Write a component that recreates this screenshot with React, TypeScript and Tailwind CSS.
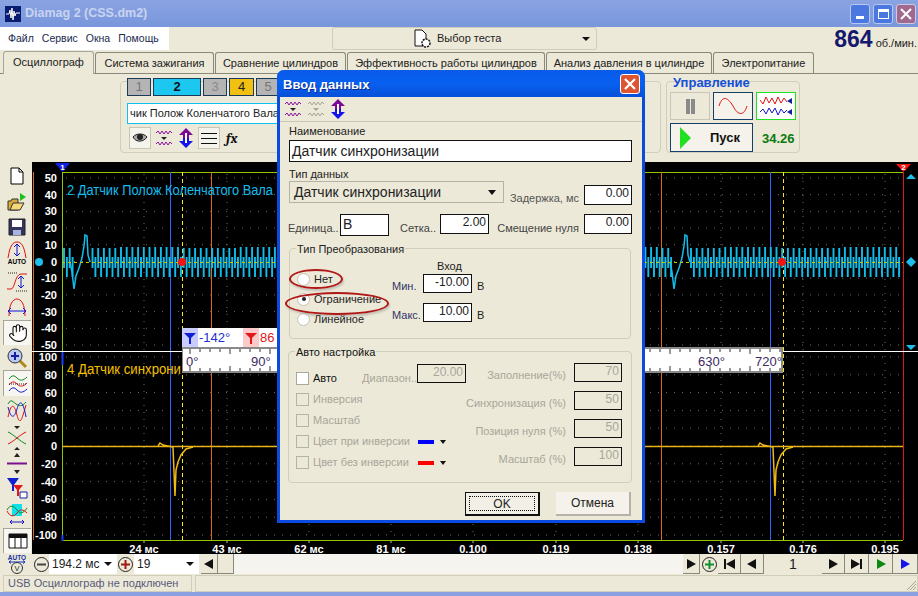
import { Hand } from "lucide-react";
import type { ReactNode } from "react";

const yTop = [50, 40, 30, 20, 10, 0, -10, -20, -30, -40, -50];
const yBottom = [100, 80, 60, 40, 20, 0, -20, -40, -60, -80, -100];
const xLabels = ["24 мс", "43 мс", "62 мс", "81 мс", "0.100", "0.119", "0.138", "0.157", "0.176", "0.195"];
const xGrid = [144, 227, 309, 391, 473, 556, 638, 721, 803, 885];

const topTabs = [
  { label: "Система зажигания", w: "w-[119px]" },
  { label: "Сравнение цилиндров", w: "w-[131px]" },
  { label: "Эффективность работы цилиндров", w: "w-[198px]" },
  { label: "Анализ давления в цилиндре", w: "w-[166px]" },
  { label: "Электропитание", w: "w-[101px]" },
];

// comb shaped sensor trace, repeats every 600px
function cyanTrace() {
  let d = "";
  for (let x = 64; x < 901; x += 5.7) {
    const local = (x - 64) % 600;
    if (local > 8 && local < 24) continue;
    const top = 247 + Math.floor(x / 60) % 2;
    d += ` M${x.toFixed(1)} ${top} V268 M${(x + 2.9).toFixed(1)} 257 V277`;
  }
  return d;
}

function glitch(o: number) {
  return `M${70 + o} 262 L${72 + o} 272 L${74 + o} 289 L${76 + o} 276 L${79 + o} 268 L${82 + o} 258 L${84 + o} 246 L${85 + o} 235 L${87 + o} 236 L${88 + o} 255 L${90 + o} 262`;
}

function yellowTrace(o: number) {
  return `M${158 + o} 446 L${160 + o} 443 L${163 + o} 445 L${173 + o} 447 L${175 + o} 496 L${176 + o} 470 L${178 + o} 462 L${181 + o} 455 L${186 + o} 449 L${193 + o} 447`;
}

function Chart() {
  const topRows = yTop.map((_, i) => 178 + i * 16.7);
  const lowRows = yBottom.map((_, i) => 357 + i * 17.8);
  return (
    <svg className="block" width="886" height="392" viewBox="32 162 886 392">
      <rect x="32" y="162" width="886" height="392" fill="#000" />
      {[...topRows, ...lowRows].map((y) => (
        <line key={y} x1="66" x2="900" y1={y} y2={y} stroke="#6a6a6a" strokeDasharray="1 7" />
      ))}
      {xGrid.map((x) => (
        <g key={x}>
          <line x1={x} x2={x} y1="174" y2="538" stroke="#6a6a6a" strokeDasharray="1 6" />
          <line x1={x} x2={x} y1="540" y2="543" stroke="#bbb" />
        </g>
      ))}
      <line x1="62" x2="903" y1="172.5" y2="172.5" stroke="#8fc800" />
      <line x1="62" x2="903" y1="540.5" y2="540.5" stroke="#8fc800" />
      <line x1="62.5" x2="62.5" y1="172" y2="540" stroke="#8fc800" />
      <line x1="62.5" x2="62.5" y1="351" y2="365" stroke="#1a3cff" strokeWidth="2" />
      <line x1="62.5" x2="62.5" y1="535" y2="541" stroke="#1a3cff" strokeWidth="2" />
      {[33.5, 211.5, 661.5].map((x) => (
        <line key={x} x1={x} x2={x} y1="172" y2="540" stroke="#d9691e" />
      ))}
      {[170.5, 770.5].map((x) => (
        <line key={x} x1={x} x2={x} y1="172" y2="540" stroke="#2f62ff" />
      ))}
      {[182.5, 783.5].map((x) => (
        <line key={x} x1={x} x2={x} y1="172" y2="540" stroke="#ffe81a" strokeDasharray="4 3" />
      ))}
      <line x1="903.5" x2="903.5" y1="172" y2="540" stroke="#e01818" />
      <line x1="32" x2="918" y1="351.5" y2="351.5" stroke="#fff" />

      <path d={cyanTrace()} fill="none" stroke="#12bdec" strokeWidth="1.9" />
      <path d={glitch(0)} fill="none" stroke="#12bdec" strokeWidth="1.5" />
      <path d={glitch(600)} fill="none" stroke="#12bdec" strokeWidth="1.5" />
      <line x1="62" x2="903" y1="262.5" y2="262.5" stroke="#c8c800" strokeDasharray="3 3" />
      <line x1="62" x2="903" y1="446.5" y2="446.5" stroke="#e8b41a" strokeWidth="1.5" />
      <path d={yellowTrace(0)} fill="none" stroke="#eeb915" strokeWidth="1.5" />
      <path d={yellowTrace(600)} fill="none" stroke="#eeb915" strokeWidth="1.5" />

      <circle cx="182" cy="262" r="4" fill="#f01414" />
      <circle cx="782" cy="262" r="4" fill="#f01414" />
      <circle cx="39" cy="262" r="4" fill="#1fbdec" />
      <path d="M911 257 L916 262 L911 267 L906 262 Z" fill="#1fbdec" />
      <path d="M906 179 L911 174 L916 179 Z" fill="#1fbdec" />
      <path d="M906 345 L916 345 L911 350 Z" fill="#1fbdec" />
      <path d="M55 163 L70 163 L62.5 172 Z" fill="#1020e0" />
      <text x="62.5" y="170" fill="#fff" fontSize="8" fontWeight="700" textAnchor="middle">1</text>
      <path d="M896 164 L911 164 L903.5 172 Z" fill="#f01414" />
      <text x="903.5" y="170" fill="#fff" fontSize="8" fontWeight="700" textAnchor="middle">2</text>

      <g fontSize="11" fontWeight="700" fill="#fff" textAnchor="end">
        {yTop.map((v, i) => (
          <text key={v} x="57" y={topRows[i] + 4}>{v}</text>
        ))}
        {yBottom.map((v, i) => (
          <text key={v} x="57" y={lowRows[i] + 4}>{v}</text>
        ))}
      </g>
      <g fontSize="11" fontWeight="700" fill="#fff" textAnchor="middle">
        {xLabels.map((t, i) => (
          <text key={t} x={xGrid[i]} y="553">{t}</text>
        ))}
      </g>
      <text x="67" y="195" fill="#12bdec" fontSize="14" textLength="206" lengthAdjust="spacingAndGlyphs">2 Датчик Полож Коленчатого Вала</text>
      <text x="67" y="374" fill="#f6c000" fontSize="14" textLength="114" lengthAdjust="spacingAndGlyphs">4 Датчик синхрони</text>
    </svg>
  );
}

function AngleRuler() {
  const ticks = Array.from({ length: 61 }, (_, i) => i * 10);
  return (
    <div className="absolute left-[182px] top-[166px] w-[601px]">
      <div className="flex h-[19px] items-stretch text-[13px] leading-[19px]">
        <div className="flex w-[16px] items-center justify-center bg-[#c8ccff]">
          <svg width="12" height="12" viewBox="0 0 12 12"><path d="M0 1 H12 L7 6 V12 H5 V6 Z" fill="#1020d0" /></svg>
        </div>
        <div className="w-[45px] bg-white pl-[1px] text-[#2030d0]">-142°</div>
        <div className="flex w-[16px] items-center justify-center bg-[#ffc8c8]">
          <svg width="12" height="12" viewBox="0 0 12 12"><path d="M0 1 H12 L7 6 V12 H5 V6 Z" fill="#e01818" /></svg>
        </div>
        <div className="w-[30px] bg-white pl-[1px] text-[#e01818]">86</div>
      </div>
      <div className="relative h-[26px] border-y-2 border-r-2 border-l border-[#8a8a8a] bg-white text-[13px] text-[#3a2a60]">
        <svg className="absolute inset-0" width="598" height="22" viewBox="0 0 598 22">
          {ticks.map((x) => (
            <g key={x} stroke="#333">
              <line x1={x + 7} x2={x + 7} y1="0" y2={x % 40 === 0 ? 5 : 3} />
              <line x1={x + 7} x2={x + 7} y1="22" y2={x % 40 === 0 ? 17 : 19} />
            </g>
          ))}
        </svg>
        <span className="absolute left-[3px] top-[3px]">0°</span>
        <span className="absolute left-[68px] top-[3px]">90°</span>
        <span className="absolute left-[515px] top-[3px]">630°</span>
        <span className="absolute left-[572px] top-[3px]">720°</span>
      </div>
    </div>
  );
}

function Squiggles({ color = "#8a10a0", mid = true }: { color?: string; mid?: boolean }) {
  return (
    <svg width="18" height="18" viewBox="0 0 18 18" fill="none" stroke={color}>
      <path d="M1 4 L3 2 L5 5 L7 2 L9 5 L11 2 L13 5 L15 2 L17 4" />
      <path d="M1 15 L3 13 L5 16 L7 13 L9 16 L11 13 L13 16 L15 13 L17 15" />
      {mid && <path d="M6 8 H12 L9 11 Z" fill={color === "#8a10a0" ? "#222" : color} stroke="none" />}
    </svg>
  );
}

function UpDown() {
  return (
    <svg width="16" height="20" viewBox="0 0 16 20">
      <path d="M8 0 L15 7 H11 V10 H5 V7 H1 Z" fill="#7a0a96" />
      <path d="M8 20 L15 13 H11 V10 H5 V13 H1 Z" fill="#1414e8" />
      <path d="M7 5 H9 V15 H7 Z" fill="#fff" />
    </svg>
  );
}

function ToolSlot({ children, pressed, h }: { children: ReactNode; pressed?: boolean; h: string }) {
  return (
    <div className={`flex ${h} w-[28px] items-center justify-center ${pressed ? "border-l border-t border-[#a8a698] bg-[#f7f6f0]" : ""}`}>
      {children}
    </div>
  );
}

function LeftToolbar() {
  return (
    <div className="flex w-[32px] shrink-0 flex-col items-start pl-[3px] pt-[1px]">
      <ToolSlot h="h-[25px]">
        <svg width="14" height="18" viewBox="0 0 14 18"><path d="M1 1 H9 L13 5 V17 H1 Z" fill="#fff" stroke="#000" /><path d="M9 1 V5 H13" fill="none" stroke="#000" /></svg>
      </ToolSlot>
      <ToolSlot h="h-[28px]">
        <svg width="20" height="20" viewBox="0 0 20 20">
          <path d="M1 9 H4 L5 7 H11 V18 H1 Z" fill="#d9a93a" stroke="#333" />
          <path d="M3 18 L6 11 H17 L13 18 Z" fill="#f6d878" stroke="#333" />
          <path d="M13 1 L19 5 L13 9 Z" fill="#20c020" />
        </svg>
      </ToolSlot>
      <ToolSlot h="h-[22px]">
        <svg width="18" height="18" viewBox="0 0 18 18">
          <path d="M1 1 H17 V17 H1 Z" fill="#34345c" stroke="#222" />
          <path d="M4 2 H14 V9 H4 Z" fill="#fff" />
          <path d="M5 12 H13 V17 H5 Z" fill="#a8b4e0" />
        </svg>
      </ToolSlot>
      <ToolSlot h="h-[30px]">
        <svg width="22" height="24" viewBox="0 0 22 24" fill="none">
          <path d="M2 17 C4 4 7 1 11 1 C15 1 18 4 20 17" stroke="#e01010" />
          <path d="M11 3 V15 M8 6 L11 3 L14 6 M8 12 L11 15 L14 12" stroke="#1414c0" />
          <text x="11" y="23" fontSize="6.5" fontWeight="700" fill="#000" stroke="none" textAnchor="middle">AUTO</text>
        </svg>
      </ToolSlot>
      <ToolSlot h="h-[28px]">
        <svg width="22" height="22" viewBox="0 0 22 22" fill="none">
          <path d="M1 18 H5 C9 18 9 3 15 3 H21" stroke="#e01010" />
          <path d="M2 2 H12 M10 20 H21" stroke="#222" strokeDasharray="1 1" />
          <path d="M15 5 V17 M12 8 L15 5 L18 8 M12 14 L15 17 L18 14" stroke="#1414c0" />
        </svg>
      </ToolSlot>
      <ToolSlot h="h-[24px]">
        <svg width="22" height="20" viewBox="0 0 22 20" fill="none">
          <path d="M3 18 C3 6 7 1 11 1 C15 1 19 6 19 18" stroke="#e01010" />
          <path d="M2 13 H20 M5 10 L2 13 L5 16 M17 10 L20 13 L17 16" stroke="#1414e0" />
        </svg>
      </ToolSlot>
      <ToolSlot pressed h="h-[25px]">
        <Hand size={20} strokeWidth={1.3} fill="#fff" color="#111" />
      </ToolSlot>
      <ToolSlot h="h-[25px]">
        <svg width="22" height="22" viewBox="0 0 22 22">
          <path d="M13 13 L20 20" stroke="#b08820" strokeWidth="3" />
          <circle cx="9" cy="9" r="7" fill="#b8c8f0" stroke="#333" />
          <path d="M5 9 H13 M9 5 V13" stroke="#1420a0" strokeWidth="2" />
        </svg>
      </ToolSlot>
      <ToolSlot pressed h="h-[26px]">
        <svg width="20" height="20" viewBox="0 0 20 20" fill="none">
          <path d="M1 5 C4 1 6 1 9 4 S15 7 19 3" stroke="#0a8a20" />
          <path d="M1 11 C4 7 6 7 9 10 S15 13 19 9" stroke="#e01010" />
          <path d="M1 10 H19" stroke="#222" strokeDasharray="1 1" />
          <path d="M1 17 C4 13 6 13 9 16 S15 19 19 15" stroke="#1414d0" />
        </svg>
      </ToolSlot>
      <ToolSlot h="h-[27px]">
        <svg width="20" height="22" viewBox="0 0 20 22" fill="none">
          <path d="M1 5 C4 -1 6 3 9 5 S15 8 19 3" stroke="#0a8a20" />
          <path d="M1 18 C4 4 7 4 10 16 S15 20 19 6" stroke="#e01010" />
          <path d="M1 8 C4 20 7 20 10 10 S16 2 19 18" stroke="#1414d0" />
        </svg>
      </ToolSlot>
      <ToolSlot h="h-[29px]">
        <svg width="20" height="24" viewBox="0 0 20 24" fill="none">
          <path d="M7 0 H13 L10 3 Z M7 24 H13 L10 21 Z" fill="#222" />
          <path d="M1 6 C6 8 14 16 19 18" stroke="#0a8a20" />
          <path d="M1 18 C6 16 14 8 19 6" stroke="#e01010" />
        </svg>
      </ToolSlot>
      <ToolSlot h="h-[23px]">
        <svg width="20" height="22" viewBox="0 0 20 22">
          <path d="M7 4 L10 0 L13 4 Z M7 17 L13 17 L10 21 Z" fill="#222" />
          <path d="M0 10.5 H20" stroke="#7a1090" strokeWidth="2" />
        </svg>
      </ToolSlot>
      <ToolSlot h="h-[26px]">
        <svg width="22" height="22" viewBox="0 0 22 22">
          <path d="M1 1 H13 L8 8 V14 H6 V8 Z" fill="#1020d0" />
          <path d="M7 8 H17 L13 13 V19 H11 V13 Z" fill="#e01818" />
          <path d="M14 15 H21 V21 H14 Z" fill="#fff" stroke="#1420a0" />
        </svg>
      </ToolSlot>
      <ToolSlot h="h-[25px]">
        <svg width="22" height="22" viewBox="0 0 22 22" fill="none">
          <path d="M6 1 H16 V13 H6 Z" fill="#10e0e8" />
          <path d="M1 7 C4 1 8 3 11 7 S17 11 21 5" stroke="#0a8a20" />
          <path d="M1 8 C4 14 8 14 11 10 S17 6 21 10" stroke="#e01010" />
          <path d="M4 19 H18 M6 17 L4 19 L6 21 M16 17 L18 19 L16 21" stroke="#1414c0" />
        </svg>
      </ToolSlot>
      <div className="mt-[2px] flex h-[25px] w-[28px] items-center justify-center border-l border-t border-[#a8a698] bg-[#f7f6f0]">
        <svg width="20" height="16" viewBox="0 0 20 16">
          <path d="M1 1 H19 V15 H1 Z" fill="#fff" stroke="#111" />
          <path d="M1 1 H19 V5 H1 Z" fill="#111" />
          <path d="M7 5 V15 M13 5 V15" stroke="#111" />
        </svg>
      </div>
    </div>
  );
}

function NumBox({ value, w, h, muted }: { value: string; w: string; h: string; muted?: boolean }) {
  return (
    <div className={`${w} ${h} shrink-0 border border-[#111] pr-[2px] text-right text-[12px] leading-[15px] ${muted ? "text-[#a8a698]" : "bg-white text-[#222]"}`}>
      {value}
    </div>
  );
}

function Radio({ on, label }: { on?: boolean; label: string }) {
  return (
    <div className="flex h-[20px] items-center gap-[4px] pl-[7px]">
      <div className="flex h-[13px] w-[13px] items-center justify-center rounded-full border border-[#c4c2b4] bg-white">
        {on && <div className="h-[4px] w-[4px] rounded-full bg-[#222]" />}
      </div>
      <span className="text-[11px] text-[#222]">{label}</span>
    </div>
  );
}

function AutoCheck({ label, enabled, swatch }: { label: string; enabled?: boolean; swatch?: string }) {
  return (
    <div className="flex h-[21px] items-center whitespace-nowrap">
      <div className={`h-[13px] w-[13px] shrink-0 border ${enabled ? "border-[#aaa89a] bg-white" : "border-[#b5b3a5]"}`} />
      <span className={`ml-[4px] w-fit text-[11px] ${enabled ? "text-[#111]" : "text-[#a8a698]"}`}>{label}</span>
      {swatch && (
        <div className="absolute left-[129px] flex items-center gap-[6px]">
          <div className={`h-[4px] w-[16px] ${swatch}`} />
          <div className="h-0 w-0 border-x-[3px] border-t-[4px] border-x-transparent border-t-[#111]" />
        </div>
      )}
    </div>
  );
}

function AutoField({ label, value }: { label: string; value: string }) {
  return (
    <div className="flex h-[19px] items-center justify-end gap-[8px]">
      <span className="mt-[5px] whitespace-nowrap text-[11px] text-[#a8a698]">{label}</span>
      <NumBox value={value} w="w-[48px]" h="h-[19px]" muted />
    </div>
  );
}

function DataDialog() {
  return (
    <div className="absolute left-[277px] top-[70px] h-[453px] w-[368px] rounded-t-[7px] border-x-[3px] border-b-[3px] border-[#0a4ade] bg-[#ece9d8]">
      <div className="-mx-[3px] flex h-[27px] items-center justify-between rounded-t-[7px] bg-gradient-to-b from-[#0a5ae8] via-[#0860f0] to-[#0850d8] pl-[6px] pr-[5px]">
        <span className="mt-[3px] text-[13px] font-bold text-white [text-shadow:1px_1px_0_#0a2a90]">Ввод данных</span>
        <div className="flex h-[20px] w-[20px] items-center justify-center rounded-[3px] border border-white bg-[#dd5533]">
          <svg width="12" height="12" viewBox="0 0 12 12"><path d="M1 1 L11 11 M11 1 L1 11" stroke="#fff" strokeWidth="2.2" /></svg>
        </div>
      </div>
      <div className="flex h-[25px] items-center gap-[5px] border-b border-[#c9c6b5] pl-[4px]">
        <Squiggles />
        <Squiggles color="#a8a698" />
        <UpDown />
      </div>
      <div className="whitespace-nowrap pl-[9px] pr-[10px] text-[11px] text-[#222]">
        <div className="mt-[1px] h-[16px] leading-[16px]">Наименование</div>
        <div className="mt-[1px] h-[22px] border border-[#111] bg-white pl-[2px] text-[14px] leading-[20px]">Датчик синхронизации</div>
        <div className="mt-[4px] h-[16px] leading-[16px]">Тип данных</div>
        <div className="-mt-[1px] flex items-start">
          <div className="flex h-[22px] w-[215px] items-center justify-between border border-[#b5b3a5] bg-[#ece9d8] pl-[4px] pr-[7px] text-[14px]">
            Датчик синхронизации
            <div className="h-0 w-0 border-x-[4px] border-t-[5px] border-x-transparent border-t-[#111]" />
          </div>
          <div className="mt-[3px] flex flex-1 items-center justify-end gap-[5px]">
            <span className="mt-[6px] text-[#555]">Задержка, мс</span>
            <NumBox value="0.00" w="w-[48px]" h="h-[20px]" />
          </div>
        </div>
        <div className="mt-[7px] flex items-start">
          <span className="-ml-[1px] mt-[6px] w-[52px] text-[#444]">Единица..</span>
          <div className="h-[22px] w-[49px] border border-[#111] bg-white pl-[2px] text-[14px] leading-[18px]">В</div>
          <span className="ml-[11px] mt-[6px] w-[40px] text-[#444]">Сетка..</span>
          <NumBox value="2.00" w="w-[49px]" h="h-[20px]" />
          <div className="flex flex-1 items-start justify-end gap-[5px]">
            <span className="mt-[6px] text-[#444]">Смещение нуля</span>
            <NumBox value="0.00" w="w-[48px]" h="h-[20px]" />
          </div>
        </div>
        <div className="relative mt-[12px] flex h-[91px] w-[342px] rounded-[4px] border border-[#d0cdb8]">
          <span className="absolute -top-[8px] left-[6px] bg-[#ece9d8] px-[1px] text-[11px] text-[#222]">Тип Преобразования</span>
          <div className="w-[102px] pt-[20px]">
            <Radio label="Нет" />
            <Radio on label="Ограничение" />
            <Radio label="Линейное" />
          </div>
          <div className="pt-[10px]">
            <div className="ml-[45px] h-[15px] leading-[15px]">Вход</div>
            <div className="flex h-[19px] items-center">
              <span className="mt-[6px] w-[31px] text-[#333366]">Мин.</span>
              <NumBox value="-10.00" w="w-[49px]" h="h-[19px]" />
              <span className="ml-[5px] mt-[6px]">В</span>
            </div>
            <div className="mt-[10px] flex h-[19px] items-center">
              <span className="mt-[6px] w-[31px] text-[#333366]">Макс.</span>
              <NumBox value="10.00" w="w-[49px]" h="h-[19px]" />
              <span className="ml-[5px] mt-[6px]">В</span>
            </div>
          </div>
        </div>
        <div className="relative -ml-[1px] mt-[12px] flex h-[132px] w-[344px] rounded-[4px] border border-[#d0cdb8] pl-[7px] pr-[13px]">
          <span className="absolute -top-[8px] left-[6px] bg-[#ece9d8] px-[1px] text-[11px] text-[#111]">Авто настройка</span>
          <div className="w-[170px] shrink-0 pt-[16px]">
            <div className="flex items-center justify-between">
              <AutoCheck enabled label="Авто" />
              <div className="-mt-[10px] flex items-center">
                <span className="mt-[10px] text-[#a8a698]">Диапазон..</span>
                <NumBox value="20.00" w="w-[49px]" h="h-[19px]" muted />
              </div>
            </div>
            <AutoCheck label="Инверсия" />
            <AutoCheck label="Масштаб" />
            <AutoCheck label="Цвет при инверсии" swatch="bg-[#0000ff]" />
            <AutoCheck label="Цвет без инверсии" swatch="bg-[#ff0000]" />
          </div>
          <div className="flex flex-1 flex-col gap-[9px] pt-[11px]">
            <AutoField label="Заполнение(%)" value="70" />
            <AutoField label="Синхронизация (%)" value="50" />
            <AutoField label="Позиция нуля (%)" value="50" />
            <AutoField label="Масштаб (%)" value="100" />
          </div>
        </div>
        <div className="mt-[9px] flex h-[24px] justify-end gap-[16px] pr-[1px]">
          <div className="flex w-[75px] items-center justify-center border border-[#111] border-b-2 border-r-2 bg-[#f2f0e6] p-[3px]">
            <div className="flex h-full w-full items-center justify-center border border-dotted border-[#111] text-[12px]">OK</div>
          </div>
          <div className="flex w-[75px] items-center justify-center border-b-2 border-r-2 border-[#b5b3a5] bg-[#f4f2ea] text-[12px]">Отмена</div>
        </div>
      </div>
      <div className="absolute left-[9px] top-[199px] h-[20px] w-[54px] rounded-[50%] border-2 border-[#b01818] shadow-[1px_2px_2px_#8886]" />
      <div className="absolute left-[5px] top-[222px] h-[23px] w-[104px] rounded-[50%] border-2 border-[#b01818] shadow-[1px_2px_2px_#8886]" />
    </div>
  );
}

function PageBtn({ w, children }: { w: string; children: ReactNode }) {
  return (
    <div className={`${w} flex h-[20px] shrink-0 items-center justify-center border-b border-r border-[#8a887a] bg-[#ece9d8]`}>
      {children}
    </div>
  );
}

function Tri({ color = "#111", dir = "right" }: { color?: string; dir?: "right" | "left" }) {
  return (
    <svg width="12" height="12" viewBox="0 0 12 12">
      <path d={dir === "right" ? "M2 1 L11 6 L2 11 Z" : "M10 1 L1 6 L10 11 Z"} fill={color} />
    </svg>
  );
}

function RoundBtn({ color, plus }: { color: string; plus?: boolean }) {
  return (
    <div className="flex h-[15px] w-[15px] shrink-0 items-center justify-center rounded-full border border-[#222]">
      <svg width="9" height="9" viewBox="0 0 9 9">
        <path d={plus ? "M0 4.5 H9 M4.5 0 V9" : "M0 4.5 H9"} stroke={color} strokeWidth="2" />
      </svg>
    </div>
  );
}

function BottomBar() {
  return (
    <div className="flex h-[20px] shrink-0 items-center text-[#222]">
      <div className="flex w-[33px] justify-center">
        <svg width="20" height="20" viewBox="0 0 20 20" fill="none">
          <text x="10" y="6" fontSize="6.5" fontWeight="700" fill="#1430a0" textAnchor="middle">AUTO</text>
          <path d="M2 8 H18 M4 6.5 L2 8 L4 9.5 M16 6.5 L18 8 L16 9.5" stroke="#1430c0" />
          <circle cx="10" cy="14" r="5.5" stroke="#333" />
          <text x="10" y="17" fontSize="7.5" fill="#222" textAnchor="middle">V</text>
        </svg>
      </div>
      <div className="flex w-[16px] justify-center"><RoundBtn color="#444" /></div>
      <div className="flex h-[20px] w-[68px] items-center justify-between whitespace-nowrap bg-white pl-[3px] pr-[5px] text-[12px]">
        194.2 мс
        <div className="h-0 w-0 border-x-[4px] border-t-[4px] border-x-transparent border-t-[#111]" />
      </div>
      <div className="flex w-[17px] justify-center"><RoundBtn color="#a01818" plus /></div>
      <div className="flex h-[20px] w-[65px] items-center justify-between bg-white pl-[3px] pr-[5px] text-[12px]">
        19
        <div className="h-0 w-0 border-x-[4px] border-t-[4px] border-x-transparent border-t-[#111]" />
      </div>
      <div className="w-[2px]" />
      <PageBtn w="w-[17px]"><Tri dir="left" /></PageBtn>
      <PageBtn w="w-[16px]">{null}</PageBtn>
      <div className="h-[20px] flex-1 bg-[#f5f4ee]" />
      <PageBtn w="w-[17px]"><Tri /></PageBtn>
      <div className="flex w-[18px] justify-center"><RoundBtn color="#109030" plus /></div>
      <PageBtn w="w-[23px]">
        <svg width="12" height="12" viewBox="0 0 12 12"><path d="M1 1 H3 V11 H1 Z M12 1 L3 6 L12 11 Z" fill="#111" /></svg>
      </PageBtn>
      <PageBtn w="w-[23px]"><Tri dir="left" /></PageBtn>
      <div className="flex h-[20px] w-[58px] items-center justify-center text-[14px]">1</div>
      <PageBtn w="w-[23px]"><Tri /></PageBtn>
      <PageBtn w="w-[24px]">
        <svg width="12" height="12" viewBox="0 0 12 12"><path d="M9 1 H11 V11 H9 Z M0 1 L9 6 L0 11 Z" fill="#111" /></svg>
      </PageBtn>
      <PageBtn w="w-[24px]"><Tri color="#0a8a10" /></PageBtn>
      <PageBtn w="w-[25px]"><Tri color="#1414e8" /></PageBtn>
    </div>
  );
}

export default function App() {
  return (
    <div className="relative flex h-[596px] w-[918px] flex-col overflow-hidden bg-[#ece9d8] [font-family:'Liberation_Sans',sans-serif] text-[11px] text-[#222]">
      {/* title bar */}
      <div className="flex h-[27px] shrink-0 items-center justify-between bg-gradient-to-b from-[#8aa4e2] to-[#7a96dc] pl-[5px] pr-[2px]">
        <div className="flex items-center gap-[4px]">
          <svg width="16" height="16" viewBox="0 0 16 16">
            <rect width="16" height="16" fill="#0a1c70" />
            <path d="M1 8 H4 L5 4 L6 12 L7 2 L8 14 L9 5 L10 10 L11 7 H15" fill="none" stroke="#fff" />
          </svg>
          <span className="text-[12.5px] font-bold text-[#c8d4f0]">Diamag 2 (CSS.dm2)</span>
        </div>
        <div className="flex gap-[3px]">
          <div className="flex h-[20px] w-[20px] items-end justify-center rounded-[3px] border border-[#b8c8f0] bg-[#4a78e0] pb-[4px]">
            <div className="h-[3px] w-[8px] bg-white" />
          </div>
          <div className="flex h-[20px] w-[20px] items-center justify-center rounded-[3px] border border-[#b8c8f0] bg-[#4a78e0]">
            <div className="h-[10px] w-[11px] border border-t-[3px] border-white" />
          </div>
          <div className="flex h-[20px] w-[20px] items-center justify-center rounded-[3px] border border-[#d0c8e0] bg-[#a06a90]">
            <svg width="12" height="12" viewBox="0 0 12 12"><path d="M1 1 L11 11 M11 1 L1 11" stroke="#fff" strokeWidth="2" /></svg>
          </div>
        </div>
      </div>

      {/* menu row */}
      <div className="flex h-[25px] shrink-0">
        <div className="flex h-[23px] w-[169px] items-center gap-[8px] bg-white pl-[8px] text-[10.5px] text-[#1a2a50]">
          <span>Файл</span>
          <span>Сервис</span>
          <span>Окна</span>
          <span>Помощь</span>
        </div>
        <div className="ml-[163px] flex h-[23px] w-[265px] items-center rounded-[3px] border border-[#d0cdb8] pl-[80px] pr-[6px]">
          <svg width="20" height="20" viewBox="0 0 20 20" fill="none">
            <path d="M2 1 H9 L13 5 V17 H2 Z" fill="#fff" stroke="#111" />
            <circle cx="13" cy="14" r="4" fill="#fff" stroke="#111" strokeWidth="1.5" strokeDasharray="2 1" />
          </svg>
          <span className="ml-[4px] flex-1 text-[11px]">Выбор теста</span>
          <div className="h-0 w-0 border-x-[4px] border-t-[4px] border-x-transparent border-t-[#111]" />
        </div>
        <div className="ml-auto flex h-[24px] items-baseline gap-[3px] pr-[1px]">
          <span className="text-[23px] font-bold leading-[24px] text-[#14186e]">864</span>
          <span className="text-[11px] text-[#222]">об./мин.</span>
        </div>
      </div>

      {/* tabs */}
      <div className="flex h-[22px] shrink-0 items-stretch gap-[1px] whitespace-nowrap border-b border-[#8a887a] pl-[3px]">
        <div className="-mt-[1px] h-[23px] w-[91px] rounded-t-[3px] border-x border-t border-[#a8a698] bg-[#ece9d8] text-center text-[11px] leading-[21px]">Осциллограф</div>
        {topTabs.map((t) => (
          <div key={t.label} className={`${t.w} rounded-t-[3px] border-x border-t border-[#8a887a] text-center text-[11px] leading-[20px]`}>
            {t.label}
          </div>
        ))}
      </div>

      {/* channels + controls */}
      <div className="flex h-[88px] shrink-0 gap-[5px] pl-[120px] pt-[7px]">
        <div className="h-[72px] w-[541px] rounded-[4px] border border-[#d0cdb8] pl-[6px]">
          <div className="-mt-[4px] flex gap-[2px] text-[13px]">
            <div className="h-[18px] w-[24px] border border-[#1a3a5a] bg-[#b4b4b4] text-center leading-[16px] text-[#777]">1</div>
            <div className="h-[18px] w-[48px] border border-[#1a3a5a] bg-[#1cc8f0] text-center font-bold leading-[16px] text-[#111]">2</div>
            <div className="h-[18px] w-[24px] border border-[#1a3a5a] bg-[#b4b4b4] text-center leading-[16px] text-[#888]">3</div>
            <div className="h-[18px] w-[25px] border border-[#1a3a5a] bg-[#f2c010] text-center leading-[16px]">4</div>
            <div className="h-[18px] w-[24px] border border-[#1a3a5a] bg-[#b4b4b4] text-center leading-[16px] text-[#777]">5</div>
          </div>
          <div className="mt-[7px] h-[21px] w-[300px] whitespace-nowrap border border-[#10c0f0] bg-white pl-[2px] text-[11px] leading-[19px]">чик Полож Коленчатого Вала</div>
          <div className="mt-[3px] flex h-[22px] items-center pl-[2px]">
            <div className="flex h-[22px] w-[22px] items-center justify-center border border-[#c9c6b5] bg-[#f4f3ec]">
              <svg width="16" height="12" viewBox="0 0 16 12">
                <path d="M1 5 C4 1 12 1 15 5 C12 10 4 11 1 5 Z" fill="#aaa" stroke="#222" />
                <circle cx="8" cy="5" r="3" fill="#222" />
              </svg>
            </div>
            <div className="ml-[4px]"><Squiggles /></div>
            <div className="ml-[5px]"><UpDown /></div>
            <div className="ml-[4px] flex h-[22px] w-[22px] flex-col justify-center gap-[4px] border border-[#c9c6b5] bg-[#f4f3ec] px-[2px]">
              <div className="h-[1px] bg-[#111]" />
              <div className="h-[1px] bg-[#111]" />
              <div className="h-[1px] bg-[#111]" />
            </div>
            <span className="ml-[6px] font-serif text-[14px] font-bold italic text-[#111]">fx</span>
          </div>
        </div>
        <div className="h-[72px] w-[134px] rounded-[4px] border border-[#d0cdb8] pl-[3px]">
          <div className="-mt-[6px] ml-[3px] h-[14px] text-[13px] font-bold leading-[14px] text-[#1450d8]">Управление</div>
          <div className="mt-[2px] flex gap-[3px]">
            <div className="flex h-[28px] w-[40px] items-center justify-center gap-[1px] border border-[#c9c6b5]">
              <div className="h-[15px] w-[4px] bg-[#8a8a8a]" />
              <div className="h-[15px] w-[4px] bg-[#8a8a8a]" />
            </div>
            <div className="flex h-[28px] w-[40px] items-center justify-center border border-[#14406a] bg-[#f4f2ea]">
              <svg width="30" height="20" viewBox="0 0 30 20" fill="none">
                <path d="M1 10 C4 0 9 0 15 10 C20 20 26 20 29 10" stroke="#e01010" />
              </svg>
            </div>
            <div className="flex h-[28px] w-[40px] items-center justify-center border border-[#20e020] bg-white">
              <svg width="34" height="22" viewBox="0 0 34 22" fill="none">
                <path d="M1 5 L4 9 L7 2 L10 8 L13 3 L16 9 L19 2 L22 8 L25 3 L28 7" stroke="#e01010" />
                <path d="M1 17 L4 14 L7 19 L10 13 L13 18 L16 13 L19 20 L22 14 L25 18 L28 15" stroke="#1414d0" />
                <path d="M33 3 V9 L28 6 Z M33 14 V20 L28 17 Z" fill="#1420a0" />
              </svg>
            </div>
          </div>
          <div className="mt-[3px] flex items-center">
            <div className="flex h-[29px] w-[83px] items-center border border-[#14406a] bg-[#f4f2ea] pl-[9px]">
              <svg width="11" height="22" viewBox="0 0 11 22"><path d="M0 0 L11 11 L0 22 Z" fill="#20e020" /></svg>
              <span className="ml-[19px] text-[13px] font-bold text-[#111]">Пуск</span>
            </div>
            <span className="ml-[9px] mt-[3px] text-[13px] font-bold text-[#0a7a10]">34.26</span>
          </div>
        </div>
      </div>

      {/* tools + chart */}
      <div className="relative flex h-[392px] shrink-0">
        <LeftToolbar />
        <div className="w-[886px]">
          <Chart />
          <AngleRuler />
        </div>
      </div>

      <BottomBar />

      {/* status */}
      <div className="flex h-[18px] shrink-0 gap-[3px] whitespace-nowrap pl-[3px] pt-[1px]">
        <div className="flex h-[17px] w-[189px] items-center border border-[#d0cdb8] pl-[4px] text-[#5a5a78]">USB Осциллограф не подключен</div>
        <div className="flex h-[17px] flex-1 items-end justify-end border border-[#d0cdb8]">
          <svg width="12" height="12" viewBox="0 0 12 12" stroke="#a8a698">
            <path d="M11 2 L2 11 M11 5 L5 11 M11 8 L8 11" />
          </svg>
        </div>
      </div>
      <div className="h-[4px] shrink-0 bg-[#8aa0e0]" />

      <DataDialog />
    </div>
  );
}
